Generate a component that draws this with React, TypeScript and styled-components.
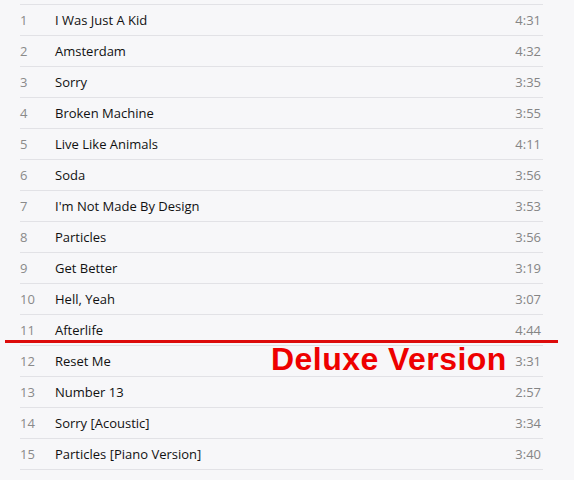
import React from "react";
import styled, { createGlobalStyle } from "styled-components";

const Global = createGlobalStyle`
  html, body { margin: 0; padding: 0; background: #f7f7f9; }
  body { font-family: "Open Sans", "Noto Sans", sans-serif; }
`;

const Page = styled.div`
  position: relative;
  width: 574px;
  height: 480px;
  padding: 4px 31px 0 20px;
  box-sizing: border-box;
  background: #f7f7f9;
  overflow: hidden;
`;

const List = styled.div`
  display: flex;
  flex-direction: column;
  border-top: 1px solid #e2e2e6;
`;

const Row = styled.div`
  display: flex;
  align-items: center;
  height: 30px;
  border-bottom: 1px solid #e2e2e6;
  font-size: 13px;
`;

const Num = styled.span`
  width: 35px;
  color: #8a8a8a;
`;

const Title = styled.span`
  flex: 1;
  color: #111111;
`;

const Time = styled.span`
  color: #858585;
  padding-right: 2px;
`;

const Marker = styled.div`
  position: absolute;
  left: 5px;
  top: 340px;
  width: 553px;
  height: 3px;
  background: #dd0b0b;
`;

const Label = styled.div`
  position: absolute;
  left: 271px;
  top: 341px;
  font-family: "Liberation Sans", Arial, sans-serif;
  font-weight: bold;
  font-size: 32px;
  line-height: 36px;
  color: #ee0000;
  letter-spacing: 0.45px;
`;

const tracks: [string, string][] = [
  ["I Was Just A Kid", "4:31"],
  ["Amsterdam", "4:32"],
  ["Sorry", "3:35"],
  ["Broken Machine", "3:55"],
  ["Live Like Animals", "4:11"],
  ["Soda", "3:56"],
  ["I'm Not Made By Design", "3:53"],
  ["Particles", "3:56"],
  ["Get Better", "3:19"],
  ["Hell, Yeah", "3:07"],
  ["Afterlife", "4:44"],
  ["Reset Me", "3:31"],
  ["Number 13", "2:57"],
  ["Sorry [Acoustic]", "3:34"],
  ["Particles [Piano Version]", "3:40"],
];

export default function App() {
  return (
    <>
      <Global />
      <Page>
        <List>
          {tracks.map(([t, d], i) => (
            <Row key={i}>
              <Num>{i + 1}</Num>
              <Title>{t}</Title>
              <Time>{d}</Time>
            </Row>
          ))}
        </List>
        <Marker />
        <Label>Deluxe Version</Label>
      </Page>
    </>
  );
}
